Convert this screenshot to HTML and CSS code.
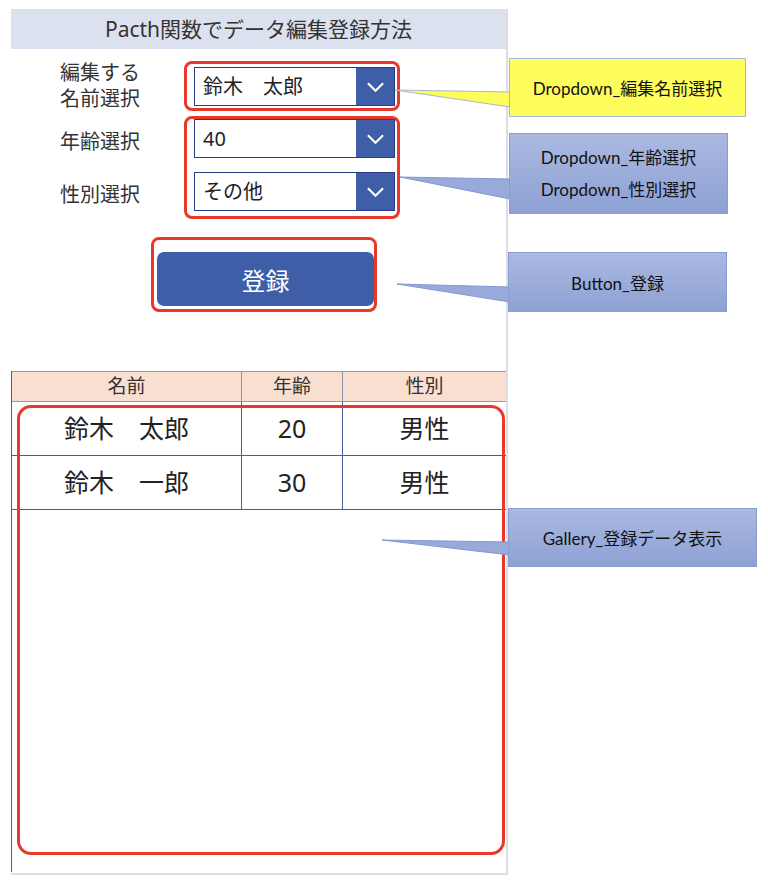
FILE: index.html
```html
<!DOCTYPE html>
<html lang="ja">
<head>
    <meta charset="UTF-8">
    <meta name="viewport" content="width=device-width, initial-scale=1.0">
    <title>Pacth関数でデータ編集登録方法</title>
    <link rel="stylesheet" href="styles.css">
</head>
<body>
    <div class="page">
        <div class="app">
            <div class="title">Pacth関数でデータ編集登録方法</div>

            <div class="form">
                <div class="row">
                    <div class="label two">編集する<br>名前選択</div>
                    <div class="hl hl-name">
                        <div class="dropdown"><span>鈴木　太郎</span><i class="chev"><svg viewBox="0 0 20 12"><path d="M2 2 L10 10 L18 2"/></svg></i></div>
                    </div>
                </div>
                <div class="row">
                    <div class="labels">
                        <div class="label">年齢選択</div>
                        <div class="label">性別選択</div>
                    </div>
                    <div class="hl hl-pair">
                        <div class="dropdown"><span>40</span><i class="chev"><svg viewBox="0 0 20 12"><path d="M2 2 L10 10 L18 2"/></svg></i></div>
                        <div class="dropdown"><span>その他</span><i class="chev"><svg viewBox="0 0 20 12"><path d="M2 2 L10 10 L18 2"/></svg></i></div>
                    </div>
                </div>
            </div>

            <div class="btn-wrap">
                <div class="hl hl-btn">
                    <button class="btn">登録</button>
                </div>
            </div>

            <div class="gallery">
                <div class="grid head">
                    <div>名前</div><div>年齢</div><div>性別</div>
                </div>
                <div class="grid item">
                    <div>鈴木　太郎</div><div>20</div><div>男性</div>
                </div>
                <div class="grid item">
                    <div>鈴木　一郎</div><div>30</div><div>男性</div>
                </div>
                <div class="gallery-hl"></div>
            </div>
        </div>

        <!-- 吹き出しの矢印 -->
        <svg class="wedges" width="768" height="883">
            <polygon class="w-yellow" points="395,90 510,92 510,107"/>
            <polygon class="w-blue" points="400,177 510,179 510,199"/>
            <polygon class="w-blue" points="397,284 510,287 510,302"/>
            <polygon class="w-blue" points="382,540 510,542 510,555"/>
        </svg>

        <div class="callout yellow c1">Dropdown_編集名前選択</div>
        <div class="callout blue c2">Dropdown_年齢選択<br>Dropdown_性別選択</div>
        <div class="callout blue c3">Button_登録</div>
        <div class="callout blue c4">Gallery_登録データ表示</div>
    </div>
</body>
</html>
```

FILE: styles.css
```css
body { margin: 0; background: #fff; font-family: "Noto Sans", "Noto Sans CJK JP", sans-serif; color: #222; }
.page { position: relative; width: 768px; height: 883px; overflow: hidden; }

.app { margin: 9px 0 0 11px; width: 495px; height: 864px; border-right: 2px solid #dcdde2; border-bottom: 2px solid #dcdde2; }
.title { height: 40px; line-height: 40px; background: #dce1ef; text-align: center; font-size: 21px; color: #333; }

.form { padding: 12px 0 0 49px; display: flex; flex-direction: column; gap: 5px; }
.row { display: flex; align-items: flex-start; }
.label { width: 124px; font-size: 20px; line-height: 26px; color: #333; }
.label.two { height: 50px; line-height: 26px; margin-top: -1px; }
.labels { display: flex; flex-direction: column; gap: 27px; padding-top: 13px; }

.hl { border: 3px solid #e8372b; border-radius: 8px; }
.hl-name { width: 201px; padding: 3px 2px 2px 7px; }
.hl-pair { width: 201px; padding: 0 2px 5px 7px; display: flex; flex-direction: column; gap: 14px; }
.dropdown { display: flex; height: 39px; border: 1px solid #2c3b86; box-sizing: border-box; }
.dropdown span { flex: 1; padding-left: 8px; font-size: 20px; line-height: 37px; }
.chev { width: 38px; background: #3f5ea8; display: flex; align-items: center; justify-content: center; }
.chev svg { width: 19px; height: 12px; fill: none; stroke: #fff; stroke-width: 2.2; }

.btn-wrap { padding: 18px 0 0 140px; }
.hl-btn { width: 217px; height: 57px; padding: 12px 0 0 3px; }
.btn { display: block; width: 217px; height: 54px; border: none; border-radius: 7px; background: #3f5ea8; color: #fff; font-family: inherit; font-size: 24px; }

.gallery { position: relative; margin-top: 59px; height: 501px; border-left: 1px solid #4b5a9c; }
.grid { display: grid; grid-template-columns: 230px 101px 163px; }
.grid div { text-align: center; border-right: 1px solid #4b5a9c; }
.grid div:last-child { border-right: none; }
.head { height: 31px; background: #f8dfd0; border-top: 1px solid #9097ba; border-bottom: 1px solid #9097ba; box-sizing: border-box; font-size: 19px; line-height: 29px; color: #333; }
.head div { border-right-color: #8e95b6; }
.item { height: 54px; border-bottom: 1px solid #4b5a9c; box-sizing: border-box; font-size: 25px; line-height: 52px; }
.gallery-hl { position: absolute; left: 5px; top: 34px; width: 482px; height: 444px; border: 3px solid #e8372b; border-radius: 14px; }

.wedges { position: absolute; left: 0; top: 0; pointer-events: none; }
.w-yellow { fill: #fdfd5c; stroke: #a8b6d6; stroke-width: 1; }
.w-blue { fill: #98aad9; stroke: #8497cf; stroke-width: 1; }

.callout { position: absolute; box-sizing: border-box; display: flex; align-items: center; justify-content: center; text-align: center; font-family: "Lato", "Noto Sans CJK JP", sans-serif; font-size: 17px; color: #111; }
.yellow { background: #fdfd5c; border: 1px solid #a8b6d6; }
.blue { background: linear-gradient(#abb9e1, #8da1d4); border: 1px solid #8a9dd2; }
.c1 { left: 509px; top: 58px; width: 237px; height: 59px; }
.c2 { left: 509px; top: 133px; width: 219px; height: 81px; line-height: 32px; }
.c3 { left: 508px; top: 252px; width: 219px; height: 60px; }
.c4 { left: 508px; top: 508px; width: 249px; height: 59px; }
```
